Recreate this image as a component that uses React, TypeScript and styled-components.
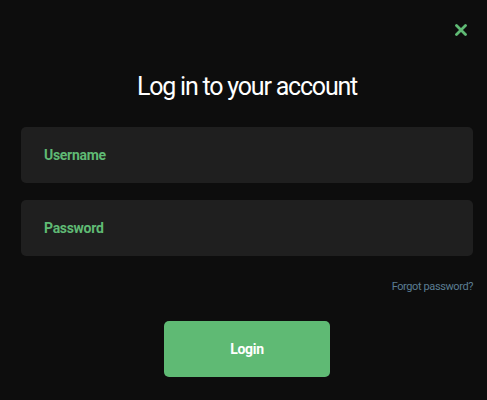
import React from 'react';
import styled, { createGlobalStyle } from 'styled-components';

const GlobalStyle = createGlobalStyle`
  html, body {
    margin: 0;
    padding: 0;
    background: #0d0d0d;
  }
  body {
    font-family: Roboto, "Liberation Sans", sans-serif;
  }
`;

const Modal = styled.div`
  box-sizing: border-box;
  display: flex;
  flex-direction: column;
  height: 400px;
  padding: 0 14px 0 21px;
  background: #0d0d0d;
`;

const TopBar = styled.div`
  display: flex;
  justify-content: flex-end;
  height: 48px;
  padding: 19px 1px 0 0;
  box-sizing: border-box;
`;

const CloseButton = styled.button`
  display: flex;
  align-items: center;
  justify-content: center;
  width: 22px;
  height: 22px;
  padding: 0;
  border: none;
  background: transparent;
  cursor: pointer;
`;

const Title = styled.h1`
  margin: 23px 0 0;
  height: 32px;
  line-height: 32px;
  text-align: center;
  color: #ffffff;
  font-size: 25px;
  font-weight: 400;
  letter-spacing: -1.2px;
`;

const Fields = styled.div`
  display: flex;
  flex-direction: column;
  gap: 17px;
  margin-top: 24px;
`;

const Field = styled.input`
  box-sizing: border-box;
  height: 56px;
  width: 100%;
  padding: 0 23px;
  border: none;
  border-radius: 5px;
  background: #1f1f1f;
  color: #ffffff;
  font-family: inherit;
  font-size: 14px;
  font-weight: 700;
  letter-spacing: -0.3px;
  outline: none;

  &::placeholder {
    color: #5fba74;
    opacity: 1;
  }
`;

const ForgotRow = styled.div`
  display: flex;
  justify-content: flex-end;
  margin-top: 23px;
`;

const ForgotLink = styled.a`
  color: #5b7d93;
  font-size: 11px;
  line-height: 16px;
  letter-spacing: -0.4px;
  text-decoration: none;
  cursor: pointer;
`;

const Actions = styled.div`
  display: flex;
  justify-content: center;
  margin-top: 26px;
`;

const LoginButton = styled.button`
  width: 166px;
  height: 56px;
  border: none;
  border-radius: 5px;
  background: #5fba74;
  color: #ffffff;
  font-family: inherit;
  font-size: 14px;
  font-weight: 700;
  letter-spacing: -0.3px;
  cursor: pointer;
`;

const CloseIcon = () => (
  <svg width="12" height="12" viewBox="0 0 12 12">
    <path d="M1.5 1.5 L10.5 10.5 M10.5 1.5 L1.5 10.5" stroke="#5fba74" strokeWidth="2.8" strokeLinecap="round" />
  </svg>
);

const App = () => (
  <>
    <GlobalStyle />
    <Modal>
      <TopBar>
        <CloseButton aria-label="Close">
          <CloseIcon />
        </CloseButton>
      </TopBar>
      <Title>Log in to your account</Title>
      <Fields>
        <Field type="text" placeholder="Username" />
        <Field type="password" placeholder="Password" />
      </Fields>
      <ForgotRow>
        <ForgotLink>Forgot password?</ForgotLink>
      </ForgotRow>
      <Actions>
        <LoginButton>Login</LoginButton>
      </Actions>
    </Modal>
  </>
);

export default App;
